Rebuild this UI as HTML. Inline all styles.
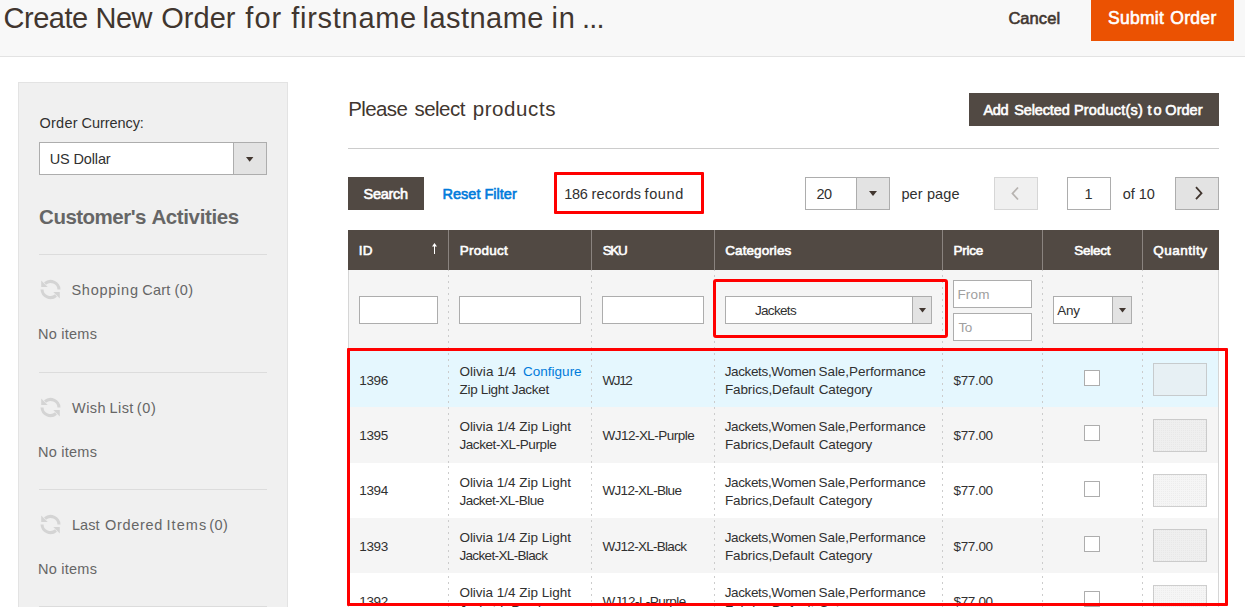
<!DOCTYPE html>
<html><head><meta charset="utf-8"><style>
html,body{margin:0;padding:0;background:#fff;width:1245px;height:607px;overflow:hidden;position:relative}
body>*{position:absolute;box-sizing:content-box}
.t{white-space:nowrap;font-family:"Liberation Sans",sans-serif}
svg{position:absolute;overflow:visible}
</style></head><body>
<div style="left:0px;top:0px;width:1245px;height:56px;background:#f8f8f8;border-bottom:1px solid #e3e3e3"></div>
<div class="t" style="left:3.50px;top:4px;font-size:29px;line-height:29px;font-weight:400;color:#41362f;letter-spacing:-0.460px">Create</div>
<div class="t" style="left:95.60px;top:4px;font-size:29px;line-height:29px;font-weight:400;color:#41362f;letter-spacing:-0.600px">New</div>
<div class="t" style="left:161.30px;top:4px;font-size:29px;line-height:29px;font-weight:400;color:#41362f;letter-spacing:0.000px">Order</div>
<div class="t" style="left:245.30px;top:4px;font-size:29px;line-height:29px;font-weight:400;color:#41362f;letter-spacing:1.050px">for</div>
<div class="t" style="left:291.30px;top:4px;font-size:29px;line-height:29px;font-weight:400;color:#41362f;letter-spacing:0.712px">firstname</div>
<div class="t" style="left:422.50px;top:4px;font-size:29px;line-height:29px;font-weight:400;color:#41362f;letter-spacing:0.471px">lastname</div>
<div class="t" style="left:551.50px;top:4px;font-size:29px;line-height:29px;font-weight:400;color:#41362f;letter-spacing:0.900px">in</div>
<div class="t" style="left:581.90px;top:4px;font-size:29px;line-height:29px;font-weight:400;color:#41362f;letter-spacing:-0.700px">...</div>
<div class="t" style="left:1008.40px;top:10px;font-size:16.5px;line-height:16.5px;font-weight:400;-webkit-text-stroke:0.6px currentColor;color:#41362f;letter-spacing:0.060px">Cancel</div>
<div style="left:1091px;top:0px;width:143px;height:41px;background:#eb5202"></div>
<div class="t" style="left:1108.00px;top:10px;font-size:17.5px;line-height:17.5px;font-weight:400;-webkit-text-stroke:0.6px currentColor;color:#ffffff;letter-spacing:0.260px">Submit</div>
<div class="t" style="left:1170.30px;top:10px;font-size:17.5px;line-height:17.5px;font-weight:400;-webkit-text-stroke:0.6px currentColor;color:#ffffff;letter-spacing:0.300px">Order</div>
<div style="left:18px;top:82px;width:268px;height:600px;background:#f0f0f0;border:1px solid #e3e3e3"></div>
<div class="t" style="left:39.40px;top:116px;font-size:14.5px;line-height:14.5px;font-weight:400;color:#303030;letter-spacing:0.275px">Order</div>
<div class="t" style="left:81.60px;top:116px;font-size:14.5px;line-height:14.5px;font-weight:400;color:#303030;letter-spacing:-0.075px">Currency:</div>
<div style="left:39px;top:142px;width:226px;height:31px;background:#fff;border:1px solid #adadad"></div>
<div style="left:233px;top:142px;width:32px;height:31px;background:#e3e3e3;border:1px solid #adadad"></div>
<svg style="left:246.3px;top:156.6px" width="7.4" height="4.7" viewBox="0 0 8 5" preserveAspectRatio="none"><path d="M0 0H8L4 5Z" fill="#41362f"/></svg>
<div class="t" style="left:49.80px;top:152px;font-size:14.5px;line-height:14.5px;font-weight:400;color:#303030;letter-spacing:-0.150px">US Dollar</div>
<div class="t" style="left:39.10px;top:207px;font-size:20.5px;line-height:20.5px;font-weight:700;color:#666666;letter-spacing:-0.511px">Customer&#x27;s</div>
<div class="t" style="left:151.40px;top:207px;font-size:20.5px;line-height:20.5px;font-weight:700;color:#666666;letter-spacing:-0.378px">Activities</div>
<div style="left:39px;top:254px;width:228px;height:1px;background:#dcdcdc"></div>
<svg style="left:40px;top:279px" width="21" height="21" viewBox="0 0 21 21"><g fill="none" stroke="#d4d4d4" stroke-width="3"><path d="M19 10.5A8.5 8.5 0 0 0 5 4.5"/><path d="M2 10.5A8.5 8.5 0 0 0 16 16.5"/></g><path d="M1.2 1.5V8H7.7Z" fill="#d4d4d4"/><path d="M19.8 19.5V13H13.3Z" fill="#d4d4d4"/></svg>
<div class="t" style="left:71.40px;top:283px;font-size:14.5px;line-height:14.5px;font-weight:400;color:#666666;letter-spacing:0.757px">Shopping</div>
<div class="t" style="left:142.30px;top:283px;font-size:14.5px;line-height:14.5px;font-weight:400;color:#666666;letter-spacing:0.167px">Cart</div>
<div class="t" style="left:174.50px;top:283px;font-size:14.5px;line-height:14.5px;font-weight:400;color:#666666;letter-spacing:0.450px">(0)</div>
<div class="t" style="left:38.00px;top:327px;font-size:14.5px;line-height:14.5px;font-weight:400;color:#666666;letter-spacing:0.243px">No items</div>
<div style="left:39px;top:372px;width:228px;height:1px;background:#dcdcdc"></div>
<svg style="left:40px;top:397px" width="21" height="21" viewBox="0 0 21 21"><g fill="none" stroke="#d4d4d4" stroke-width="3"><path d="M19 10.5A8.5 8.5 0 0 0 5 4.5"/><path d="M2 10.5A8.5 8.5 0 0 0 16 16.5"/></g><path d="M1.2 1.5V8H7.7Z" fill="#d4d4d4"/><path d="M19.8 19.5V13H13.3Z" fill="#d4d4d4"/></svg>
<div class="t" style="left:72.10px;top:401px;font-size:14.5px;line-height:14.5px;font-weight:400;color:#666666;letter-spacing:0.400px">Wish</div>
<div class="t" style="left:109.50px;top:401px;font-size:14.5px;line-height:14.5px;font-weight:400;color:#666666;letter-spacing:0.433px">List</div>
<div class="t" style="left:136.80px;top:401px;font-size:14.5px;line-height:14.5px;font-weight:400;color:#666666;letter-spacing:0.700px">(0)</div>
<div class="t" style="left:38.00px;top:445px;font-size:14.5px;line-height:14.5px;font-weight:400;color:#666666;letter-spacing:0.243px">No items</div>
<div style="left:39px;top:489px;width:228px;height:1px;background:#dcdcdc"></div>
<svg style="left:40px;top:514px" width="21" height="21" viewBox="0 0 21 21"><g fill="none" stroke="#d4d4d4" stroke-width="3"><path d="M19 10.5A8.5 8.5 0 0 0 5 4.5"/><path d="M2 10.5A8.5 8.5 0 0 0 16 16.5"/></g><path d="M1.2 1.5V8H7.7Z" fill="#d4d4d4"/><path d="M19.8 19.5V13H13.3Z" fill="#d4d4d4"/></svg>
<div class="t" style="left:72.00px;top:518px;font-size:14.5px;line-height:14.5px;font-weight:400;color:#666666;letter-spacing:0.000px">Last</div>
<div class="t" style="left:104.90px;top:518px;font-size:14.5px;line-height:14.5px;font-weight:400;color:#666666;letter-spacing:0.717px">Ordered</div>
<div class="t" style="left:166.50px;top:518px;font-size:14.5px;line-height:14.5px;font-weight:400;color:#666666;letter-spacing:1.050px">Items</div>
<div class="t" style="left:209.30px;top:518px;font-size:14.5px;line-height:14.5px;font-weight:400;color:#666666;letter-spacing:0.450px">(0)</div>
<div class="t" style="left:38.00px;top:562px;font-size:14.5px;line-height:14.5px;font-weight:400;color:#666666;letter-spacing:0.243px">No items</div>
<div style="left:39px;top:606px;width:228px;height:1px;background:#dcdcdc"></div>
<div class="t" style="left:348.30px;top:99px;font-size:20.5px;line-height:20.5px;font-weight:400;color:#41362f;letter-spacing:-0.620px">Please</div>
<div class="t" style="left:414.40px;top:99px;font-size:20.5px;line-height:20.5px;font-weight:400;color:#41362f;letter-spacing:-0.500px">select</div>
<div class="t" style="left:472.70px;top:99px;font-size:20.5px;line-height:20.5px;font-weight:400;color:#41362f;letter-spacing:0.586px">products</div>
<div style="left:969px;top:93px;width:250px;height:33px;background:#514943"></div>
<div class="t" style="left:983.60px;top:103px;font-size:14.5px;line-height:14.5px;font-weight:400;-webkit-text-stroke:0.6px currentColor;color:#ffffff;letter-spacing:-0.450px">Add</div>
<div class="t" style="left:1014.30px;top:103px;font-size:14.5px;line-height:14.5px;font-weight:400;-webkit-text-stroke:0.6px currentColor;color:#ffffff;letter-spacing:-0.143px">Selected</div>
<div class="t" style="left:1073.90px;top:103px;font-size:14.5px;line-height:14.5px;font-weight:400;-webkit-text-stroke:0.6px currentColor;color:#ffffff;letter-spacing:0.222px">Product(s)</div>
<div class="t" style="left:1147.60px;top:103px;font-size:14.5px;line-height:14.5px;font-weight:400;-webkit-text-stroke:0.6px currentColor;color:#ffffff;letter-spacing:2.000px">to</div>
<div class="t" style="left:1165.30px;top:103px;font-size:14.5px;line-height:14.5px;font-weight:400;-webkit-text-stroke:0.6px currentColor;color:#ffffff;letter-spacing:0.050px">Order</div>
<div style="left:348px;top:148px;width:871px;height:1px;background:#cccccc"></div>
<div style="left:348px;top:177px;width:76px;height:33px;background:#514943"></div>
<div class="t" style="left:363.60px;top:187px;font-size:14.5px;line-height:14.5px;font-weight:400;-webkit-text-stroke:0.6px currentColor;color:#ffffff;letter-spacing:-0.280px">Search</div>
<div class="t" style="left:442.50px;top:187px;font-size:14.5px;line-height:14.5px;font-weight:400;-webkit-text-stroke:0.6px currentColor;color:#007bdb;letter-spacing:0.009px">Reset Filter</div>
<div style="left:554px;top:172px;width:144px;height:36px;border:3px solid #ff0000;border-radius:1px"></div>
<div class="t" style="left:564.30px;top:187px;font-size:14.5px;line-height:14.5px;font-weight:400;color:#303030;letter-spacing:-0.400px">186</div>
<div class="t" style="left:591.40px;top:187px;font-size:14.5px;line-height:14.5px;font-weight:400;color:#303030;letter-spacing:0.217px">records</div>
<div class="t" style="left:644.50px;top:187px;font-size:14.5px;line-height:14.5px;font-weight:400;color:#303030;letter-spacing:0.625px">found</div>
<div style="left:805px;top:177px;width:83px;height:31px;background:#fff;border:1px solid #adadad"></div>
<div style="left:856px;top:177px;width:32px;height:31px;background:#e3e3e3;border:1px solid #adadad"></div>
<svg style="left:869px;top:191px" width="8" height="5" viewBox="0 0 8 5"><path d="M0 0H8L4 5Z" fill="#41362f"/></svg>
<div class="t" style="left:816.40px;top:187px;font-size:14.5px;line-height:14.5px;font-weight:400;color:#303030;letter-spacing:-0.400px">20</div>
<div class="t" style="left:901.40px;top:187px;font-size:14.5px;line-height:14.5px;font-weight:400;color:#303030;letter-spacing:0.129px">per page</div>
<div style="left:994px;top:177px;width:42px;height:31px;background:#f0f0f0;border:1px solid #d6d6d6"></div>
<svg style="left:1010px;top:186px" width="10" height="15" viewBox="0 0 10 15"><path d="M8 1.5L2.5 7.5L8 13.5" fill="none" stroke="#b7b3b0" stroke-width="1.8"/></svg>
<div style="left:1067px;top:177px;width:42px;height:31px;background:#fff;border:1px solid #adadad"></div>
<div class="t" style="left:1084.50px;top:187px;font-size:14.5px;line-height:14.5px;font-weight:400;color:#303030;letter-spacing:0.000px">1</div>
<div class="t" style="left:1122.70px;top:187px;font-size:14.5px;line-height:14.5px;font-weight:400;color:#303030;letter-spacing:-0.025px">of 10</div>
<div style="left:1175px;top:177px;width:42px;height:31px;background:#e3e3e3;border:1px solid #adadad"></div>
<svg style="left:1194px;top:186px" width="10" height="15" viewBox="0 0 10 15"><path d="M2 1.2L7.5 7.2L2 13.2" fill="none" stroke="#41362f" stroke-width="1.8"/></svg>
<div style="left:348px;top:230px;width:871px;height:40px;background:#514943"></div>
<div style="left:448px;top:230px;width:1px;height:40px;background:#8a837f"></div>
<div style="left:591px;top:230px;width:1px;height:40px;background:#8a837f"></div>
<div style="left:714px;top:230px;width:1px;height:40px;background:#8a837f"></div>
<div style="left:942px;top:230px;width:1px;height:40px;background:#8a837f"></div>
<div style="left:1042px;top:230px;width:1px;height:40px;background:#8a837f"></div>
<div style="left:1142px;top:230px;width:1px;height:40px;background:#8a837f"></div>
<div class="t" style="left:358.80px;top:244px;font-size:13.5px;line-height:13.5px;font-weight:400;-webkit-text-stroke:0.6px currentColor;color:#ffffff;letter-spacing:0.100px">ID</div>
<div class="t" style="left:459.70px;top:244px;font-size:13.5px;line-height:13.5px;font-weight:400;-webkit-text-stroke:0.6px currentColor;color:#ffffff;letter-spacing:0.250px">Product</div>
<div class="t" style="left:602.65px;top:244px;font-size:13.5px;line-height:13.5px;font-weight:400;-webkit-text-stroke:0.6px currentColor;color:#ffffff;letter-spacing:-1.275px">SKU</div>
<div class="t" style="left:725.30px;top:244px;font-size:13.5px;line-height:13.5px;font-weight:400;-webkit-text-stroke:0.6px currentColor;color:#ffffff;letter-spacing:0.078px">Categories</div>
<div class="t" style="left:953.50px;top:244px;font-size:13.5px;line-height:13.5px;font-weight:400;-webkit-text-stroke:0.6px currentColor;color:#ffffff;letter-spacing:-0.275px">Price</div>
<div class="t" style="left:1074.30px;top:244px;font-size:13.5px;line-height:13.5px;font-weight:400;-webkit-text-stroke:0.6px currentColor;color:#ffffff;letter-spacing:-0.260px">Select</div>
<div class="t" style="left:1153.20px;top:244px;font-size:13.5px;line-height:13.5px;font-weight:400;-webkit-text-stroke:0.6px currentColor;color:#ffffff;letter-spacing:0.500px">Quantity</div>
<div style="left:434px;top:245px;width:1px;height:9px;background:#fff"></div>
<svg style="left:432px;top:242.5px" width="5" height="3.5" viewBox="0 0 6 4" preserveAspectRatio="none"><path d="M0 4H6L3 0Z" fill="#fff"/></svg>
<div style="left:348px;top:270px;width:871px;height:82px;background:#f5f5f5"></div>
<div style="left:359px;top:296px;width:77px;height:26px;background:#fff;border:1px solid #adadad"></div>
<div style="left:459px;top:296px;width:120px;height:26px;background:#fff;border:1px solid #adadad"></div>
<div style="left:602px;top:296px;width:100px;height:26px;background:#fff;border:1px solid #adadad"></div>
<div style="left:725px;top:296px;width:205px;height:26px;background:#fff;border:1px solid #adadad"></div>
<div style="left:912px;top:296px;width:18px;height:26px;background:#e3e3e3;border:1px solid #adadad"></div>
<svg style="left:918.7px;top:307.9px" width="7" height="4.6" viewBox="0 0 8 5" preserveAspectRatio="none"><path d="M0 0H8L4 5Z" fill="#41362f"/></svg>
<div class="t" style="left:754.90px;top:304px;font-size:13.5px;line-height:13.5px;font-weight:400;color:#303030;letter-spacing:-0.667px">Jackets</div>
<div style="left:953px;top:280px;width:77px;height:26px;background:#fff;border:1px solid #adadad"></div>
<div class="t" style="left:957.40px;top:288px;font-size:13.5px;line-height:13.5px;font-weight:400;color:#a0a0a0;letter-spacing:0.167px">From</div>
<div style="left:953px;top:313px;width:77px;height:26px;background:#fff;border:1px solid #adadad"></div>
<div class="t" style="left:958.40px;top:321px;font-size:13.5px;line-height:13.5px;font-weight:400;color:#a0a0a0;letter-spacing:-0.300px">To</div>
<div style="left:1053px;top:296px;width:77px;height:26px;background:#fff;border:1px solid #adadad"></div>
<div style="left:1112px;top:296px;width:18px;height:26px;background:#e3e3e3;border:1px solid #adadad"></div>
<svg style="left:1118.5px;top:307.9px" width="7" height="4.6" viewBox="0 0 8 5" preserveAspectRatio="none"><path d="M0 0H8L4 5Z" fill="#41362f"/></svg>
<div class="t" style="left:1057.30px;top:304px;font-size:13.5px;line-height:13.5px;font-weight:400;color:#303030;letter-spacing:-0.300px">Any</div>
<div style="left:348px;top:351px;width:871px;height:56px;background:#e5f7fe"></div>
<div class="t" style="left:359.20px;top:374px;font-size:13.5px;line-height:13.5px;font-weight:400;color:#303030;letter-spacing:-0.300px">1396</div>
<div class="t" style="left:459.55px;top:365px;font-size:13.5px;line-height:13.5px;font-weight:400;color:#303030;letter-spacing:0.017px">Olivia 1/4</div>
<div class="t" style="left:523.10px;top:365px;font-size:13.5px;line-height:13.5px;font-weight:400;color:#007bdb;letter-spacing:0.000px">Configure</div>
<div class="t" style="left:459.55px;top:383px;font-size:13.5px;line-height:13.5px;font-weight:400;color:#303030;letter-spacing:-0.330px">Zip Light Jacket</div>
<div class="t" style="left:602.50px;top:374px;font-size:13.5px;line-height:13.5px;font-weight:400;color:#303030;letter-spacing:-1.400px">WJ12</div>
<div class="t" style="left:724.70px;top:365px;font-size:13.5px;line-height:13.5px;font-weight:400;color:#303030;letter-spacing:-0.367px">Jackets,Women</div>
<div class="t" style="left:818.50px;top:365px;font-size:13.5px;line-height:13.5px;font-weight:400;color:#303030;letter-spacing:-0.047px">Sale,Performance</div>
<div class="t" style="left:724.90px;top:383px;font-size:13.5px;line-height:13.5px;font-weight:400;color:#303030;letter-spacing:-0.100px">Fabrics,Default</div>
<div class="t" style="left:818.70px;top:383px;font-size:13.5px;line-height:13.5px;font-weight:400;color:#303030;letter-spacing:-0.157px">Category</div>
<div class="t" style="left:953.50px;top:374px;font-size:13.5px;line-height:13.5px;font-weight:400;color:#303030;letter-spacing:-0.340px">$77.00</div>
<div style="left:1084px;top:370px;width:14px;height:14px;background:#fff;border:1px solid #adadad;border-radius:0.5px"></div>
<div style="left:1153px;top:363px;width:52px;height:31px;background:rgba(233,233,233,.5);border:1px solid rgba(173,173,173,.55)"></div>
<div style="left:348px;top:407px;width:871px;height:56px;background:#f5f5f5"></div>
<div class="t" style="left:359.20px;top:429px;font-size:13.5px;line-height:13.5px;font-weight:400;color:#303030;letter-spacing:-0.300px">1395</div>
<div class="t" style="left:459.40px;top:420px;font-size:13.5px;line-height:13.5px;font-weight:400;color:#303030;letter-spacing:-0.016px">Olivia 1/4 Zip Light</div>
<div class="t" style="left:459.40px;top:438px;font-size:13.5px;line-height:13.5px;font-weight:400;color:#303030;letter-spacing:-0.413px">Jacket-XL-Purple</div>
<div class="t" style="left:602.50px;top:429px;font-size:13.5px;line-height:13.5px;font-weight:400;color:#303030;letter-spacing:-0.523px">WJ12-XL-Purple</div>
<div class="t" style="left:724.70px;top:420px;font-size:13.5px;line-height:13.5px;font-weight:400;color:#303030;letter-spacing:-0.367px">Jackets,Women</div>
<div class="t" style="left:818.50px;top:420px;font-size:13.5px;line-height:13.5px;font-weight:400;color:#303030;letter-spacing:-0.047px">Sale,Performance</div>
<div class="t" style="left:724.90px;top:438px;font-size:13.5px;line-height:13.5px;font-weight:400;color:#303030;letter-spacing:-0.100px">Fabrics,Default</div>
<div class="t" style="left:818.70px;top:438px;font-size:13.5px;line-height:13.5px;font-weight:400;color:#303030;letter-spacing:-0.157px">Category</div>
<div class="t" style="left:953.50px;top:429px;font-size:13.5px;line-height:13.5px;font-weight:400;color:#303030;letter-spacing:-0.340px">$77.00</div>
<div style="left:1084px;top:425px;width:14px;height:14px;background:#fff;border:1px solid #adadad;border-radius:0.5px"></div>
<div style="left:1153px;top:419px;width:52px;height:31px;background:repeating-conic-gradient(rgba(0,0,0,.03) 0 25%,transparent 0 100%) 0 0/2px 2px,rgba(233,233,233,.45);border:1px solid rgba(173,173,173,.55)"></div>
<div style="left:348px;top:463px;width:871px;height:55px;background:#ffffff"></div>
<div class="t" style="left:359.20px;top:484px;font-size:13.5px;line-height:13.5px;font-weight:400;color:#303030;letter-spacing:-0.300px">1394</div>
<div class="t" style="left:459.40px;top:476px;font-size:13.5px;line-height:13.5px;font-weight:400;color:#303030;letter-spacing:-0.016px">Olivia 1/4 Zip Light</div>
<div class="t" style="left:459.40px;top:494px;font-size:13.5px;line-height:13.5px;font-weight:400;color:#303030;letter-spacing:-0.508px">Jacket-XL-Blue</div>
<div class="t" style="left:602.50px;top:484px;font-size:13.5px;line-height:13.5px;font-weight:400;color:#303030;letter-spacing:-0.691px">WJ12-XL-Blue</div>
<div class="t" style="left:724.70px;top:476px;font-size:13.5px;line-height:13.5px;font-weight:400;color:#303030;letter-spacing:-0.367px">Jackets,Women</div>
<div class="t" style="left:818.50px;top:476px;font-size:13.5px;line-height:13.5px;font-weight:400;color:#303030;letter-spacing:-0.047px">Sale,Performance</div>
<div class="t" style="left:724.90px;top:494px;font-size:13.5px;line-height:13.5px;font-weight:400;color:#303030;letter-spacing:-0.100px">Fabrics,Default</div>
<div class="t" style="left:818.70px;top:494px;font-size:13.5px;line-height:13.5px;font-weight:400;color:#303030;letter-spacing:-0.157px">Category</div>
<div class="t" style="left:953.50px;top:484px;font-size:13.5px;line-height:13.5px;font-weight:400;color:#303030;letter-spacing:-0.340px">$77.00</div>
<div style="left:1084px;top:481px;width:14px;height:14px;background:#fff;border:1px solid #adadad;border-radius:0.5px"></div>
<div style="left:1153px;top:474px;width:52px;height:31px;background:repeating-conic-gradient(rgba(0,0,0,.03) 0 25%,transparent 0 100%) 0 0/2px 2px,rgba(233,233,233,.45);border:1px solid rgba(173,173,173,.55)"></div>
<div style="left:348px;top:518px;width:871px;height:55px;background:#f5f5f5"></div>
<div class="t" style="left:359.20px;top:540px;font-size:13.5px;line-height:13.5px;font-weight:400;color:#303030;letter-spacing:-0.300px">1393</div>
<div class="t" style="left:459.40px;top:531px;font-size:13.5px;line-height:13.5px;font-weight:400;color:#303030;letter-spacing:-0.016px">Olivia 1/4 Zip Light</div>
<div class="t" style="left:459.40px;top:549px;font-size:13.5px;line-height:13.5px;font-weight:400;color:#303030;letter-spacing:-0.643px">Jacket-XL-Black</div>
<div class="t" style="left:602.50px;top:540px;font-size:13.5px;line-height:13.5px;font-weight:400;color:#303030;letter-spacing:-0.717px">WJ12-XL-Black</div>
<div class="t" style="left:724.70px;top:531px;font-size:13.5px;line-height:13.5px;font-weight:400;color:#303030;letter-spacing:-0.367px">Jackets,Women</div>
<div class="t" style="left:818.50px;top:531px;font-size:13.5px;line-height:13.5px;font-weight:400;color:#303030;letter-spacing:-0.047px">Sale,Performance</div>
<div class="t" style="left:724.90px;top:549px;font-size:13.5px;line-height:13.5px;font-weight:400;color:#303030;letter-spacing:-0.100px">Fabrics,Default</div>
<div class="t" style="left:818.70px;top:549px;font-size:13.5px;line-height:13.5px;font-weight:400;color:#303030;letter-spacing:-0.157px">Category</div>
<div class="t" style="left:953.50px;top:540px;font-size:13.5px;line-height:13.5px;font-weight:400;color:#303030;letter-spacing:-0.340px">$77.00</div>
<div style="left:1084px;top:536px;width:14px;height:14px;background:#fff;border:1px solid #adadad;border-radius:0.5px"></div>
<div style="left:1153px;top:529px;width:52px;height:31px;background:repeating-conic-gradient(rgba(0,0,0,.03) 0 25%,transparent 0 100%) 0 0/2px 2px,rgba(233,233,233,.45);border:1px solid rgba(173,173,173,.55)"></div>
<div style="left:348px;top:573px;width:871px;height:67px;background:#ffffff"></div>
<div class="t" style="left:359.20px;top:595px;font-size:13.5px;line-height:13.5px;font-weight:400;color:#303030;letter-spacing:-0.300px">1392</div>
<div class="t" style="left:459.40px;top:586px;font-size:13.5px;line-height:13.5px;font-weight:400;color:#303030;letter-spacing:-0.016px">Olivia 1/4 Zip Light</div>
<div class="t" style="left:459.40px;top:604px;font-size:13.5px;line-height:13.5px;font-weight:400;color:#303030;letter-spacing:-0.413px">Jacket-L-Purple</div>
<div class="t" style="left:602.50px;top:595px;font-size:13.5px;line-height:13.5px;font-weight:400;color:#303030;letter-spacing:-0.523px">WJ12-L-Purple</div>
<div class="t" style="left:724.70px;top:586px;font-size:13.5px;line-height:13.5px;font-weight:400;color:#303030;letter-spacing:-0.367px">Jackets,Women</div>
<div class="t" style="left:818.50px;top:586px;font-size:13.5px;line-height:13.5px;font-weight:400;color:#303030;letter-spacing:-0.047px">Sale,Performance</div>
<div class="t" style="left:724.90px;top:604px;font-size:13.5px;line-height:13.5px;font-weight:400;color:#303030;letter-spacing:-0.100px">Fabrics,Default</div>
<div class="t" style="left:818.70px;top:604px;font-size:13.5px;line-height:13.5px;font-weight:400;color:#303030;letter-spacing:-0.157px">Category</div>
<div class="t" style="left:953.50px;top:595px;font-size:13.5px;line-height:13.5px;font-weight:400;color:#303030;letter-spacing:-0.340px">$77.00</div>
<div style="left:1084px;top:591px;width:14px;height:14px;background:#fff;border:1px solid #adadad;border-radius:0.5px"></div>
<div style="left:1153px;top:585px;width:52px;height:31px;background:repeating-conic-gradient(rgba(0,0,0,.03) 0 25%,transparent 0 100%) 0 0/2px 2px,rgba(233,233,233,.45);border:1px solid rgba(173,173,173,.55)"></div>
<div style="left:448px;top:270px;width:1px;height:82px;background:repeating-linear-gradient(to bottom,#cccccc 0,#cccccc 2px,transparent 2px,transparent 6px) 0 5px/1px 6px"></div>
<div style="left:448px;top:352px;width:1px;height:55px;background:repeating-linear-gradient(to bottom,#cccccc 0,#cccccc 2px,transparent 2px,transparent 6px) 0 1px/1px 6px"></div>
<div style="left:448px;top:407px;width:1px;height:56px;background:repeating-linear-gradient(to bottom,#cccccc 0,#cccccc 2px,transparent 2px,transparent 6px) 0 0px/1px 6px"></div>
<div style="left:448px;top:463px;width:1px;height:55px;background:repeating-linear-gradient(to bottom,#cccccc 0,#cccccc 2px,transparent 2px,transparent 6px) 0 3px/1px 6px"></div>
<div style="left:448px;top:518px;width:1px;height:55px;background:repeating-linear-gradient(to bottom,#cccccc 0,#cccccc 2px,transparent 2px,transparent 6px) 0 2px/1px 6px"></div>
<div style="left:448px;top:573px;width:1px;height:67px;background:repeating-linear-gradient(to bottom,#cccccc 0,#cccccc 2px,transparent 2px,transparent 6px) 0 3px/1px 6px"></div>
<div style="left:591px;top:270px;width:1px;height:82px;background:repeating-linear-gradient(to bottom,#cccccc 0,#cccccc 2px,transparent 2px,transparent 6px) 0 5px/1px 6px"></div>
<div style="left:591px;top:352px;width:1px;height:55px;background:repeating-linear-gradient(to bottom,#cccccc 0,#cccccc 2px,transparent 2px,transparent 6px) 0 1px/1px 6px"></div>
<div style="left:591px;top:407px;width:1px;height:56px;background:repeating-linear-gradient(to bottom,#cccccc 0,#cccccc 2px,transparent 2px,transparent 6px) 0 0px/1px 6px"></div>
<div style="left:591px;top:463px;width:1px;height:55px;background:repeating-linear-gradient(to bottom,#cccccc 0,#cccccc 2px,transparent 2px,transparent 6px) 0 3px/1px 6px"></div>
<div style="left:591px;top:518px;width:1px;height:55px;background:repeating-linear-gradient(to bottom,#cccccc 0,#cccccc 2px,transparent 2px,transparent 6px) 0 2px/1px 6px"></div>
<div style="left:591px;top:573px;width:1px;height:67px;background:repeating-linear-gradient(to bottom,#cccccc 0,#cccccc 2px,transparent 2px,transparent 6px) 0 3px/1px 6px"></div>
<div style="left:714px;top:270px;width:1px;height:82px;background:repeating-linear-gradient(to bottom,#cccccc 0,#cccccc 2px,transparent 2px,transparent 6px) 0 5px/1px 6px"></div>
<div style="left:714px;top:352px;width:1px;height:55px;background:repeating-linear-gradient(to bottom,#cccccc 0,#cccccc 2px,transparent 2px,transparent 6px) 0 1px/1px 6px"></div>
<div style="left:714px;top:407px;width:1px;height:56px;background:repeating-linear-gradient(to bottom,#cccccc 0,#cccccc 2px,transparent 2px,transparent 6px) 0 0px/1px 6px"></div>
<div style="left:714px;top:463px;width:1px;height:55px;background:repeating-linear-gradient(to bottom,#cccccc 0,#cccccc 2px,transparent 2px,transparent 6px) 0 3px/1px 6px"></div>
<div style="left:714px;top:518px;width:1px;height:55px;background:repeating-linear-gradient(to bottom,#cccccc 0,#cccccc 2px,transparent 2px,transparent 6px) 0 2px/1px 6px"></div>
<div style="left:714px;top:573px;width:1px;height:67px;background:repeating-linear-gradient(to bottom,#cccccc 0,#cccccc 2px,transparent 2px,transparent 6px) 0 3px/1px 6px"></div>
<div style="left:942px;top:270px;width:1px;height:82px;background:repeating-linear-gradient(to bottom,#cccccc 0,#cccccc 2px,transparent 2px,transparent 6px) 0 5px/1px 6px"></div>
<div style="left:942px;top:352px;width:1px;height:55px;background:repeating-linear-gradient(to bottom,#cccccc 0,#cccccc 2px,transparent 2px,transparent 6px) 0 1px/1px 6px"></div>
<div style="left:942px;top:407px;width:1px;height:56px;background:repeating-linear-gradient(to bottom,#cccccc 0,#cccccc 2px,transparent 2px,transparent 6px) 0 0px/1px 6px"></div>
<div style="left:942px;top:463px;width:1px;height:55px;background:repeating-linear-gradient(to bottom,#cccccc 0,#cccccc 2px,transparent 2px,transparent 6px) 0 3px/1px 6px"></div>
<div style="left:942px;top:518px;width:1px;height:55px;background:repeating-linear-gradient(to bottom,#cccccc 0,#cccccc 2px,transparent 2px,transparent 6px) 0 2px/1px 6px"></div>
<div style="left:942px;top:573px;width:1px;height:67px;background:repeating-linear-gradient(to bottom,#cccccc 0,#cccccc 2px,transparent 2px,transparent 6px) 0 3px/1px 6px"></div>
<div style="left:1042px;top:270px;width:1px;height:82px;background:repeating-linear-gradient(to bottom,#cccccc 0,#cccccc 2px,transparent 2px,transparent 6px) 0 5px/1px 6px"></div>
<div style="left:1042px;top:352px;width:1px;height:55px;background:repeating-linear-gradient(to bottom,#cccccc 0,#cccccc 2px,transparent 2px,transparent 6px) 0 1px/1px 6px"></div>
<div style="left:1042px;top:407px;width:1px;height:56px;background:repeating-linear-gradient(to bottom,#cccccc 0,#cccccc 2px,transparent 2px,transparent 6px) 0 0px/1px 6px"></div>
<div style="left:1042px;top:463px;width:1px;height:55px;background:repeating-linear-gradient(to bottom,#cccccc 0,#cccccc 2px,transparent 2px,transparent 6px) 0 3px/1px 6px"></div>
<div style="left:1042px;top:518px;width:1px;height:55px;background:repeating-linear-gradient(to bottom,#cccccc 0,#cccccc 2px,transparent 2px,transparent 6px) 0 2px/1px 6px"></div>
<div style="left:1042px;top:573px;width:1px;height:67px;background:repeating-linear-gradient(to bottom,#cccccc 0,#cccccc 2px,transparent 2px,transparent 6px) 0 3px/1px 6px"></div>
<div style="left:1142px;top:270px;width:1px;height:82px;background:repeating-linear-gradient(to bottom,#cccccc 0,#cccccc 2px,transparent 2px,transparent 6px) 0 5px/1px 6px"></div>
<div style="left:1142px;top:352px;width:1px;height:55px;background:repeating-linear-gradient(to bottom,#cccccc 0,#cccccc 2px,transparent 2px,transparent 6px) 0 1px/1px 6px"></div>
<div style="left:1142px;top:407px;width:1px;height:56px;background:repeating-linear-gradient(to bottom,#cccccc 0,#cccccc 2px,transparent 2px,transparent 6px) 0 0px/1px 6px"></div>
<div style="left:1142px;top:463px;width:1px;height:55px;background:repeating-linear-gradient(to bottom,#cccccc 0,#cccccc 2px,transparent 2px,transparent 6px) 0 3px/1px 6px"></div>
<div style="left:1142px;top:518px;width:1px;height:55px;background:repeating-linear-gradient(to bottom,#cccccc 0,#cccccc 2px,transparent 2px,transparent 6px) 0 2px/1px 6px"></div>
<div style="left:1142px;top:573px;width:1px;height:67px;background:repeating-linear-gradient(to bottom,#cccccc 0,#cccccc 2px,transparent 2px,transparent 6px) 0 3px/1px 6px"></div>
<div style="left:348px;top:270px;width:1px;height:340px;background:#d6d6d6"></div>
<div style="left:1218px;top:270px;width:1px;height:340px;background:#d6d6d6"></div>
<div style="left:713px;top:279px;width:229px;height:53px;border:3px solid #ff0000;border-radius:3px"></div>
<div style="left:347px;top:348px;width:875px;height:252px;border:3px solid #ff0000;border-radius:1px"></div>
</body></html>
